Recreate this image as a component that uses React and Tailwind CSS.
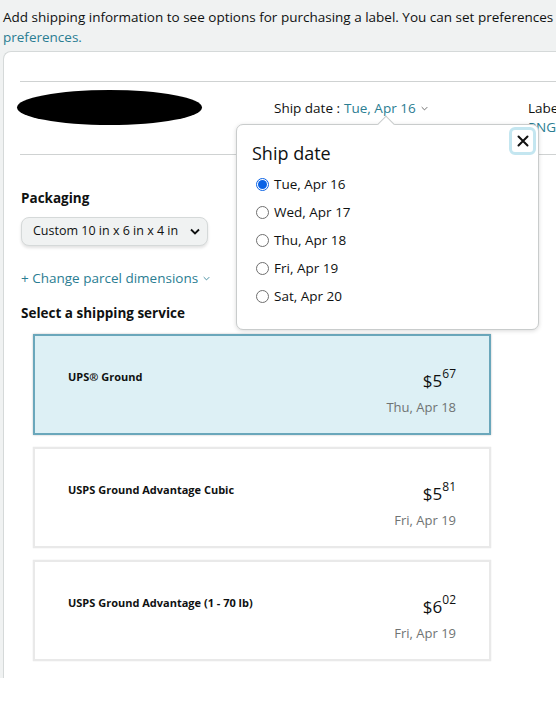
import React from "react";

const font = { fontFamily: '"Open Sans", "Noto Sans", sans-serif' };

function Chevron({ className = "" }) {
  return (
    <svg viewBox="0 0 10 6" className={className} fill="none" stroke="currentColor" strokeWidth="1.2">
      <path d="M1 1l4 4 4-4" />
    </svg>
  );
}

function Radio({ checked }) {
  return checked ? (
    <span className="w-[13px] h-[13px] rounded-full border border-[#0b63e5] bg-white flex items-center justify-center">
      <span className="w-[9px] h-[9px] rounded-full bg-[#0b63e5]" />
    </span>
  ) : (
    <span className="w-[13px] h-[13px] rounded-full border border-[#6f6f6f] bg-white" />
  );
}

function ServiceCard({ name, dollars, cents, date, selected }) {
  return (
    <div
      className={
        "h-[101px] flex justify-between pl-[33px] pr-[33px] " +
        (selected
          ? "bg-[#ddf0f5] border-2 border-[#6aa7bb] shadow-[0_0_2px_rgba(0,0,0,0.25)]"
          : "bg-white border-2 border-[#e9e9e9] shadow-[0_0_1px_rgba(0,0,0,0.15)]")
      }
    >
      <div className="pt-[33px] text-[11px] font-bold text-[#0f1111] leading-[16px]">{name}</div>
      <div className="pt-[32px] flex flex-col items-end">
        <div className="flex items-start text-[#0f1111] leading-none">
          <span className="text-[17px] mt-[4px]">${dollars}</span>
          <span className="text-[12px] mt-[0px]">{cents}</span>
        </div>
        <div className="mt-[10px] text-[13px] text-[#6f7373] leading-[16px]">{date}</div>
      </div>
    </div>
  );
}

export default function App() {
  const dates = ["Tue, Apr 16", "Wed, Apr 17", "Thu, Apr 18", "Fri, Apr 19", "Sat, Apr 20"];
  return (
    <div className="w-[556px] h-[705px] bg-white overflow-hidden" style={font}>
      <div className="h-[678px] bg-[#f0f2f2] overflow-hidden flex flex-col">
        <p className="pl-[3px] pt-[7px] text-[13.5px] leading-[20px] text-[#0f1111] whitespace-nowrap">
          Add shipping information to see options for purchasing a label. You can set preferences
          <br />
          <span className="text-[#2a7d92]">preferences.</span>
        </p>
        <div className="ml-[3px] mt-[4px] flex-1 bg-white border border-r-0 border-b-0 border-[#d5d9d9] rounded-tl-[8px] pl-[16px]">
          <div className="mt-[29px] border-t border-[#cfd2d2]" />
          <div className="h-[72px] flex items-start relative">
            <div className="ml-[-3px] mt-[8px] w-[185px] h-[35px] bg-black rounded-[50%/50%]" />
            <div className="ml-[72px] mt-[16px] h-[20px] flex items-center text-[13.5px] text-[#0f1111]">
              <span>Ship date : </span>
              <span className="text-[#2a7d92] ml-[4px]">Tue, Apr 16</span>
              <Chevron className="w-[7px] h-[5px] ml-[5px] text-[#555]" />
            </div>
            <div className="ml-auto mt-[16px] w-[28px] overflow-hidden text-[13.5px] leading-[20px] whitespace-nowrap">
              <div className="text-[#0f1111]">Label</div>
              <div className="text-[#2a7d92] mt-[-1px]">PNG</div>
            </div>

            {/* Popover */}
            <div className="absolute left-[216px] top-[42px] w-[303px] h-[206px] bg-white border border-[#c9cccc] rounded-[7px] shadow-[0_1px_4px_rgba(0,0,0,0.15)] z-10">
              <div className="absolute left-[143px] top-[-7px] w-[12px] h-[12px] bg-white border-l border-t border-[#c9cccc] rotate-45" />
              <div className="absolute right-[2px] top-[2px] w-[27px] h-[28px] rounded-[6px] border-[3px] border-[#c4e6f0] bg-white flex items-center justify-center">
                <svg viewBox="0 0 12 12" className="w-[12px] h-[12px]" stroke="#111" strokeWidth="2" strokeLinecap="round">
                  <path d="M1.5 1.5l9 9M10.5 1.5l-9 9" />
                </svg>
              </div>
              <div className="pl-[15px] pt-[16px] text-[18px] leading-[24px] text-[#0f1111]">Ship date</div>
              <div className="pl-[19px] pt-[5px] flex flex-col">
                {dates.map((d, i) => (
                  <label key={d} className="h-[28px] flex items-center gap-[5px] text-[13.5px] text-[#0f1111]">
                    <Radio checked={i === 0} />
                    <span>{d}</span>
                  </label>
                ))}
              </div>
            </div>
          </div>
          <div className="border-t border-[#cfd2d2]" />
          <div className="pl-[1px] pt-[33px] text-[13.5px] font-bold text-[#0f1111] leading-[20px]">Packaging</div>
          <div className="mt-[9px] ml-[1px] w-[187px] h-[29px] rounded-[8px] bg-[#f0f2f2] border border-[#d5d9d9] shadow-[0_2px_3px_rgba(15,17,17,0.12)] flex items-center pl-[11px] pr-[7px] text-[12.5px] text-[#0f1111]">
            <span>Custom 10 in x 6 in x 4 in</span>
            <svg viewBox="0 0 10 6" className="w-[10px] h-[7px] ml-auto" fill="none" stroke="#0f1111" strokeWidth="1.8">
              <path d="M1 1l4 4 4-4" />
            </svg>
          </div>
          <div className="pl-[1px] mt-[22px] flex items-center text-[13.5px] text-[#2a7d92] leading-[20px]">
            <span>+ Change parcel dimensions</span>
            <Chevron className="w-[7px] h-[5px] ml-[5px] text-[#2a7d92]" />
          </div>
          <div className="pl-[1px] mt-[15px] text-[13.5px] font-bold text-[#0f1111] leading-[20px]">Select a shipping service</div>
          <div className="ml-[13px] mt-[11px] w-[458px] flex flex-col gap-[12px]">
            <ServiceCard name="UPS® Ground" dollars="5" cents="67" date="Thu, Apr 18" selected />
            <ServiceCard name="USPS Ground Advantage Cubic" dollars="5" cents="81" date="Fri, Apr 19" />
            <ServiceCard name="USPS Ground Advantage (1 - 70 lb)" dollars="6" cents="02" date="Fri, Apr 19" />
          </div>
        </div>
      </div>
    </div>
  );
}
